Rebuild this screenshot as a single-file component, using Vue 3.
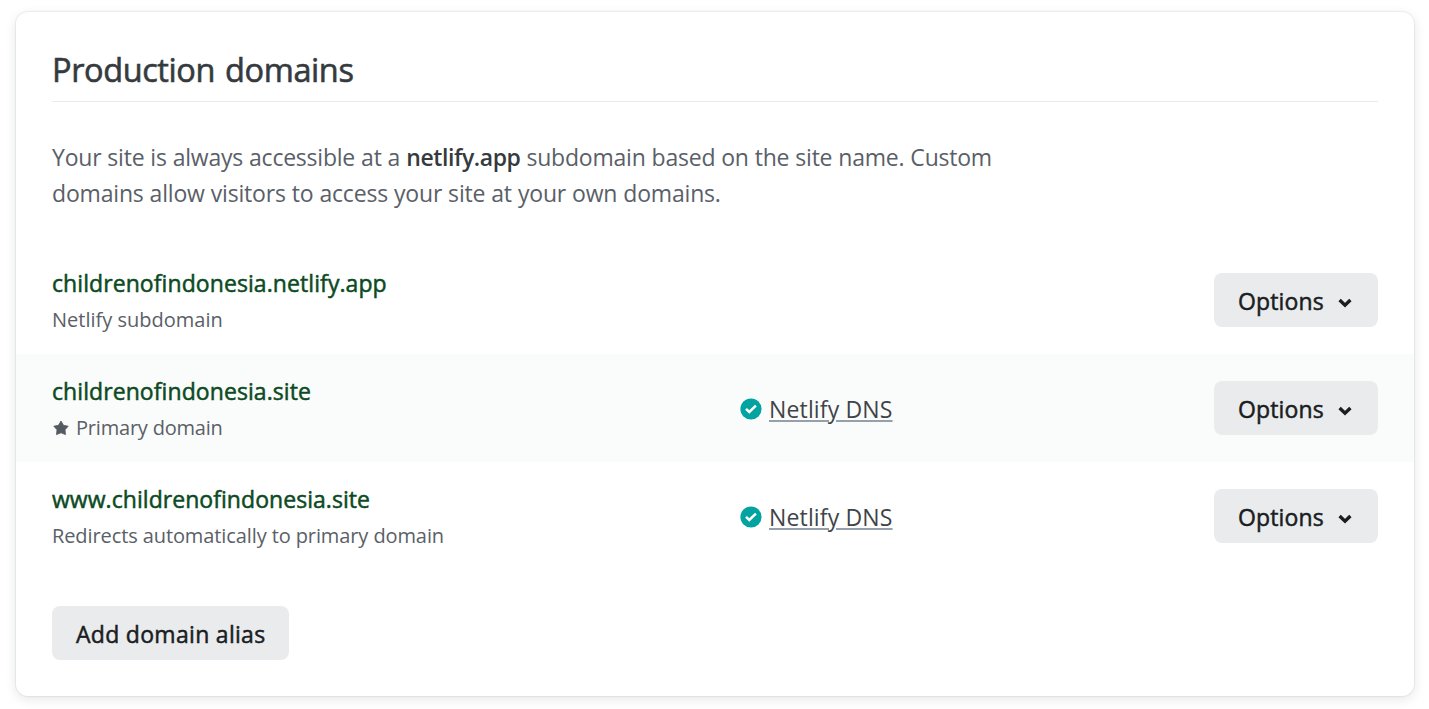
<script setup>
const domains = [
  { name: 'childrenofindonesia.netlify.app', note: 'Netlify subdomain', id: 'app' },
  { name: 'childrenofindonesia.site', note: 'Primary domain', id: 'site', primary: true, dns: true },
  { name: 'www.childrenofindonesia.site', note: 'Redirects automatically to primary domain', id: 'www', dns: true },
]
</script>

<template>
  <main class="page">
    <section class="card">
      <h2 class="title"><span>Production domains</span></h2>
      <p class="intro">
        <span class="line first">Your site is always accessible at a <strong>netlify.app</strong> subdomain based on the site name. Custom</span><br>
        <span class="line second">domains allow visitors to access your site at your own domains.</span>
      </p>
      <ul class="list">
        <li v-for="d in domains" :key="d.id" class="row" :class="{ primary: d.primary }">
          <div class="info">
            <div><a class="name" :class="'name-' + d.id">{{ d.name }}</a></div>
            <div class="note">
              <svg v-if="d.primary" class="star" width="18" height="18" viewBox="0 0 18 18">
                <path d="M9 2 L11.5 6.3 L16.2 7.2 L13 10.8 L13.5 15.6 L9 13.8 L4.5 15.6 L5 10.8 L1.8 7.2 L6.5 6.3 Z" fill="currentColor" stroke="currentColor" stroke-width=".8" stroke-linejoin="round" />
              </svg>
              <span :class="'note-' + d.id">{{ d.note }}</span>
            </div>
          </div>
          <div class="dns">
            <template v-if="d.dns">
              <svg class="check" width="22" height="22" viewBox="0 0 22 22">
                <circle cx="11" cy="11" r="10.6" fill="#02a3a0" />
                <path d="M6 10.9 L9.3 14 L15.9 7.6" fill="none" stroke="#fff" stroke-width="2.5" />
              </svg>
              <a class="dns-link">Netlify DNS</a>
            </template>
          </div>
          <button class="button options" type="button">
            <span>Options</span>
            <svg class="chevron" width="14" height="10" viewBox="0 0 14 10">
              <path d="M1.6 2 L7 7.2 L12.4 2" fill="none" stroke="currentColor" stroke-width="3.4" />
            </svg>
          </button>
        </li>
      </ul>
      <button class="button add" type="button"><span>Add domain alias</span></button>
    </section>
  </main>
</template>

<style>
body {
  background: #fff;
}
</style>

<style scoped>
.page {
  height: 709px;
  box-sizing: border-box;
  padding: 12px 15px 13px 16px;
  overflow: hidden;
  font-family: "Segoe UI", "Open Sans", "Noto Sans", sans-serif;
  color: #5a6067;
}
.card {
  height: 684px;
  box-sizing: border-box;
  padding: 36px 36px 0;
  border-radius: 12px;
  background: #fff;
  box-shadow: 0 0 1px 1px rgba(14, 30, 37, 0.06), 0 3px 12px rgba(14, 30, 37, 0.11);
}
.title {
  margin: 0;
  height: 54px;
  box-sizing: border-box;
  border-bottom: 1px solid #e9ebed;
  font-size: 32.5px;
  font-weight: 500;
  line-height: 44px;
  letter-spacing: -0.4px;
  word-spacing: 2px;
  color: #353a3e;
  -webkit-text-stroke: 0.6px currentColor;
  white-space: nowrap;
}
.intro {
  margin: 37px 0 0;
  height: 73px;
  font-size: 23px;
  line-height: 36px;
  white-space: nowrap;
}
.first {
  letter-spacing: -0.22px;
  word-spacing: 0.25px;
}
.second {
  letter-spacing: -0.18px;
  word-spacing: 0.2px;
}
.intro strong {
  font-weight: 600;
  letter-spacing: -0.4px;
  color: #353a3e;
}
.list {
  list-style: none;
  margin: 34px -36px 0;
  padding: 0;
}
.row {
  display: grid;
  grid-template-columns: 688px 1fr auto;
  align-items: center;
  height: 108px;
  box-sizing: border-box;
  padding: 0 36px;
}
.row.primary {
  background: #fafcfb;
}
.info {
  height: 72px;
  margin-top: 2px;
}
.name {
  font-size: 23px;
  font-weight: 500;
  line-height: 36px;
  letter-spacing: 0.08px;
  color: #0c4a23;
  -webkit-text-stroke: 0.5px currentColor;
  white-space: nowrap;
}
.name-www {
  letter-spacing: 0.05px;
}
.note {
  display: flex;
  align-items: center;
  gap: 6px;
  height: 36px;
  margin-top: 1px;
  font-size: 20px;
  line-height: 36px;
  white-space: nowrap;
}
.note-site {
  letter-spacing: -0.2px;
}
.note-www {
  letter-spacing: -0.1px;
}
.star {
  color: #545a61;
}
.dns {
  display: flex;
  align-items: center;
  gap: 7px;
}
.check {
  margin-top: 2px;
}
.dns-link {
  margin-top: 2px;
  font-size: 23px;
  line-height: 36px;
  letter-spacing: 0.15px;
  color: #3f4448;
  text-decoration: underline;
  text-decoration-color: #95a0ac;
  text-decoration-thickness: 2px;
  text-underline-offset: 2px;
}
.button {
  display: flex;
  align-items: center;
  height: 54px;
  box-sizing: border-box;
  border: 0;
  border-radius: 8px;
  background: #e9ebed;
  color: #1a1d21;
  font-family: inherit;
  font-size: 23px;
  font-weight: 500;
  line-height: 54px;
  padding: 1px 24px 0;
  white-space: nowrap;
}
.button span {
  -webkit-text-stroke: 0.5px currentColor;
}
.options {
  width: 164px;
  justify-content: space-between;
  letter-spacing: 0.15px;
}
.chevron {
  margin: 4px 2px 0 0;
}
.add {
  width: 237px;
  margin-top: 36px;
  letter-spacing: 0.3px;
}
</style>
